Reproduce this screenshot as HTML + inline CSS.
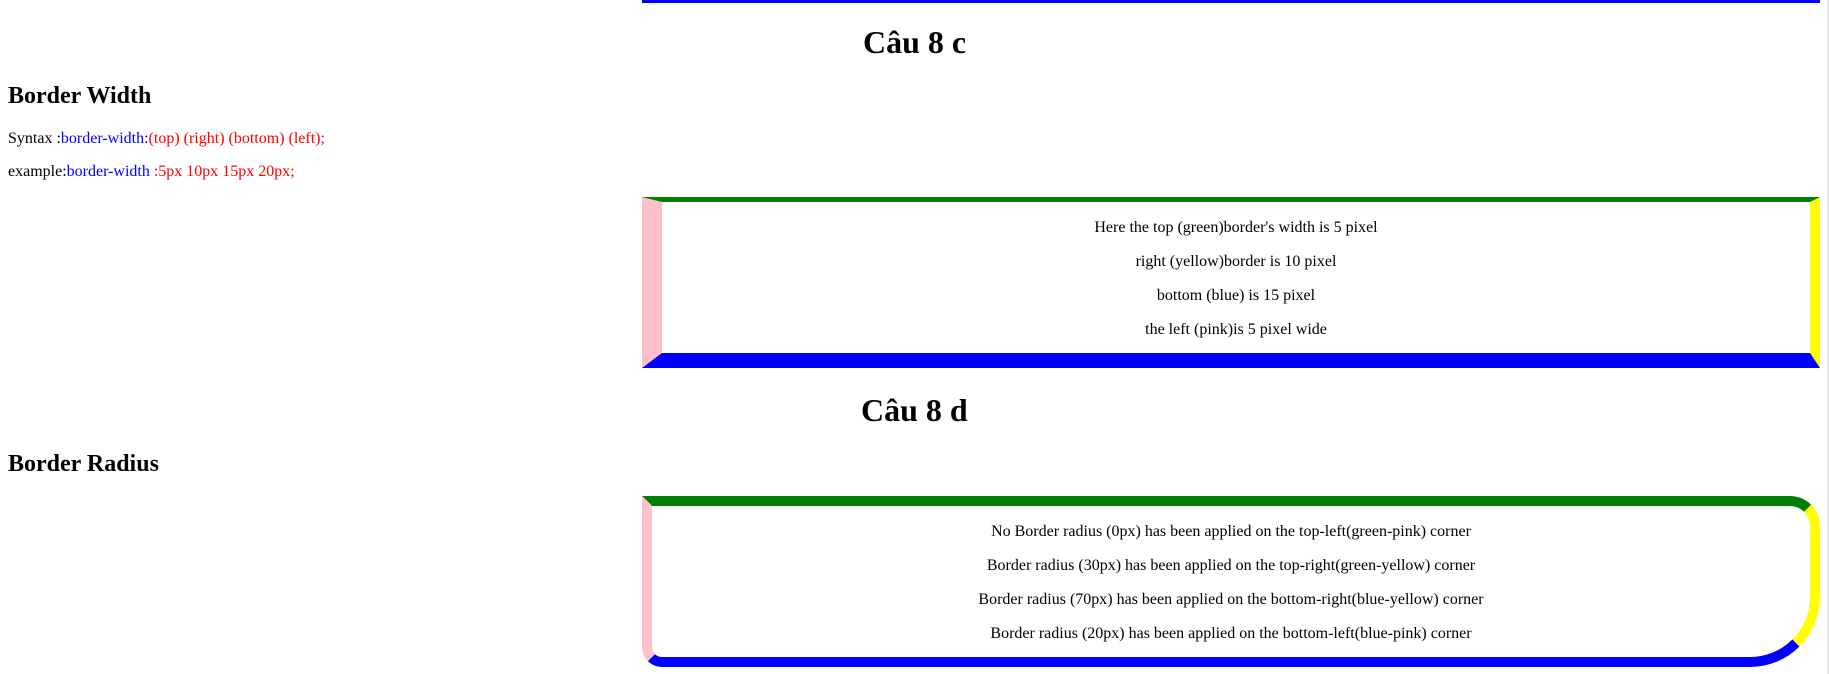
<!DOCTYPE html>
<html><head><meta charset="utf-8">
<style>
html,body{margin:0;padding:0;width:1829px;height:674px;overflow:hidden;background:#fff;font-family:"Liberation Serif",serif;color:#000;}
.a{position:absolute;white-space:nowrap;line-height:1;}
.h1{font-size:32px;font-weight:bold;}
.h2{font-size:24px;font-weight:bold;}
.p{font-size:16px;}
.b{color:blue}.r{color:red}
.box{position:absolute;left:642px;width:1178px;box-sizing:border-box;text-align:center;font-size:16px;}
.box p{margin:0;position:absolute;left:0;right:0;line-height:1;}
#c{top:197px;height:171px;border-style:solid;border-width:5px 10px 15px 20px;border-color:green yellow blue pink;}
#d{top:496px;height:171px;border-style:solid;border-width:10px;border-color:green yellow blue pink;border-radius:0 30px 70px 20px;}
#sb{position:absolute;left:1827px;top:0;width:2px;height:674px;background:#e8e8e8;}
</style></head><body>
<div style="position:absolute;left:642px;top:0;width:1178px;height:3px;background:blue;"></div>
<div id="sb"></div>
<div class="a h1" style="left:863px;top:26px;">Câu 8 c</div>
<div class="a h2" style="left:8px;top:84px;">Border Width</div>
<div class="a p" style="left:8px;top:131px;">Syntax :<span class="b">border-width:</span><span class="r">(top) (right) (bottom) (left);</span></div>
<div class="a p" style="left:8px;top:164px;">example:<span class="b">border-width </span><span class="r">:5px 10px 15px 20px;</span></div>
<div class="box" id="c">
<p style="top:18px">Here the top (green)border's width is 5 pixel</p>
<p style="top:52px">right (yellow)border is 10 pixel</p>
<p style="top:86px">bottom (blue) is 15 pixel</p>
<p style="top:120px">the left (pink)is 5 pixel wide</p>
</div>
<div class="a h1" style="left:861px;top:394px;">Câu 8 d</div>
<div class="a h2" style="left:8px;top:452px;">Border Radius</div>
<div class="box" id="d">
<p style="top:18px">No Border radius (0px) has been applied on the top-left(green-pink) corner</p>
<p style="top:52px">Border radius (30px) has been applied on the top-right(green-yellow) corner</p>
<p style="top:86px">Border radius (70px) has been applied on the bottom-right(blue-yellow) corner</p>
<p style="top:120px">Border radius (20px) has been applied on the bottom-left(blue-pink) corner</p>
</div>
</body></html>
